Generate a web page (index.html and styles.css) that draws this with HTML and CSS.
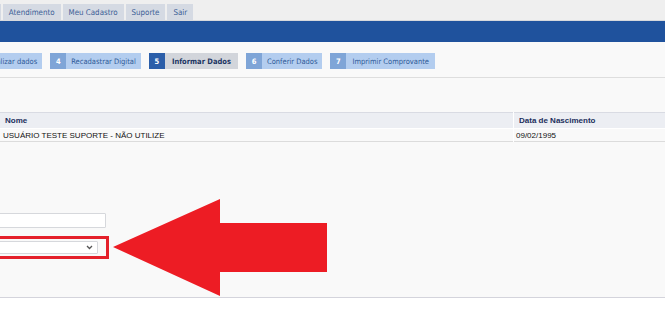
FILE: index.html
```html
<!DOCTYPE html>
<html lang="pt-BR">
<head>
  <meta charset="UTF-8">
  <title>Recadastramento</title>
  <link rel="stylesheet" href="styles.css">
</head>
<body>
  <div id="topnav">
    <a class="tab" href="#">Início</a>
    <a class="tab" href="#">Atendimento</a>
    <a class="tab" href="#">Meu Cadastro</a>
    <a class="tab" href="#">Suporte</a>
    <a class="tab" href="#">Sair</a>
  </div>
  <div id="bluebar"></div>

  <div id="content">
    <div class="steps">
      <div class="step">
        <span class="num">3</span><span class="label">Atualizar dados</span>
      </div>
      <div class="step">
        <span class="num">4</span><span class="label">Recadastrar Digital</span>
      </div>
      <div class="step active">
        <span class="num">5</span><span class="label">Informar Dados</span>
      </div>
      <div class="step">
        <span class="num">6</span><span class="label">Conferir Dados</span>
      </div>
      <div class="step">
        <span class="num">7</span><span class="label">Imprimir Comprovante</span>
      </div>
    </div>

    <table class="grid">
      <thead>
        <tr>
          <th>Nome</th>
          <th class="col-date">Data de Nascimento</th>
        </tr>
      </thead>
      <tbody>
        <tr>
          <td>USUÁRIO TESTE SUPORTE - NÃO UTILIZE</td>
          <td class="col-date">09/02/1995</td>
        </tr>
      </tbody>
    </table>

    <form class="fields">
      <input type="text" class="field">
      <div class="highlight">
        <div class="select-wrap">
          <select class="field">
            <option></option>
          </select>
          <svg class="chevron" width="7" height="5" viewBox="0 0 7 5">
            <polyline points="1,1 3.5,3.5 6,1" fill="none" stroke="#555" stroke-width="1.3"/>
          </svg>
        </div>
      </div>
    </form>

    <svg class="arrow" width="215" height="99" viewBox="0 0 215 99">
      <polygon points="0,48 107,0 107,24 214,24 214,73 107,73 107,97" fill="#ed1c24"/>
    </svg>
  </div>
</body>
</html>
```

FILE: styles.css
```css
html {
  margin: 0;
  padding: 0;
}

body {
  margin: 0;
  background: #ffffff;
  font-family: "DejaVu Sans Condensed", "DejaVu Sans", sans-serif;
  overflow: hidden;
}

#topnav {
  display: flex;
  align-items: flex-end;
  gap: 2px;
  height: 21px;
  box-sizing: border-box;
  padding-top: 5px;
  margin-left: -30px;
  background: #efefef;
  border-bottom: 1px solid #d6d8dc;

  >.tab {
    display: flex;
    align-items: center;
    height: 16px;
    padding: 0 6px;
    background: #d5dae3;
    color: #3b5e96;
    font-size: 7.9px;
    text-decoration: none;
  }
}

#bluebar {
  height: 21px;
  background: #1f529d;
}

#content {
  position: relative;
  background: #f9f9f9;
  padding-top: 11px;
  height: 244px;
  border-bottom: 1px solid #d4d4dc;
}

.steps {
  display: flex;
  gap: 8px;
  height: 16px;
  margin-left: -36px;
  padding-bottom: 8px;
  border-bottom: 1px solid #dedede;
  font-size: 7.5px;

  .step {
    display: flex;
  }

  .num {
    display: flex;
    align-items: center;
    justify-content: center;
    width: 16px;
    background: #7fa5d7;
    color: #ffffff;
    font-weight: bold;
  }

  .label {
    display: flex;
    align-items: center;
    padding: 0 5px;
    background: #b3cdef;
    color: #2e5a98;
  }

  .step:last-child .label {
    padding: 0 6px;
  }

  .active .num {
    background: #2b5ea9;
  }

  .active .label {
    padding: 0 7px;
    background: #d2d5db;
    color: #1d3563;
    font-weight: bold;
  }
}

.grid {
  width: 100%;
  margin-top: 34px;
  border-collapse: collapse;
  font-family: "Liberation Sans", Arial, sans-serif;
  font-size: 8px;
  border-top: 1px solid #d9dbe3;
  border-bottom: 1px solid #dcdcdc;

  th {
    height: 15px;
    padding: 0 5px;
    text-align: left;
    background: #eceef3;
    color: #1c2f5c;
    border-bottom: 1px solid #ffffff;
  }

  td {
    height: 12px;
    padding: 0 3px;
    color: #111111;
  }

  .col-date {
    width: 141px;
    border-left: 1px solid #ffffff;
  }

  td.col-date {
    padding-left: 2px;
  }
}

.fields {
  display: flex;
  flex-direction: column;
  align-items: flex-start;
  gap: 8px;
  margin: 71px 0 0 -40px;

  .field {
    box-sizing: border-box;
    height: 15px;
    background: #ffffff;
    border: 1px solid #d6d8dc;
    border-radius: 1px;
    font-size: 8px;
  }

  >input.field {
    width: 146px;
  }

  .highlight {
    padding: 2px 8px 2px 2px;
    border: 3px solid #e4202a;
  }

  .select-wrap {
    position: relative;
    display: flex;
  }

  select.field {
    appearance: none;
    width: 133px;
    height: 13px;
    padding: 0;
  }

  .chevron {
    position: absolute;
    right: 5px;
    top: 4px;
  }
}

.arrow {
  position: absolute;
  left: 113px;
  top: 157px;
}
```
